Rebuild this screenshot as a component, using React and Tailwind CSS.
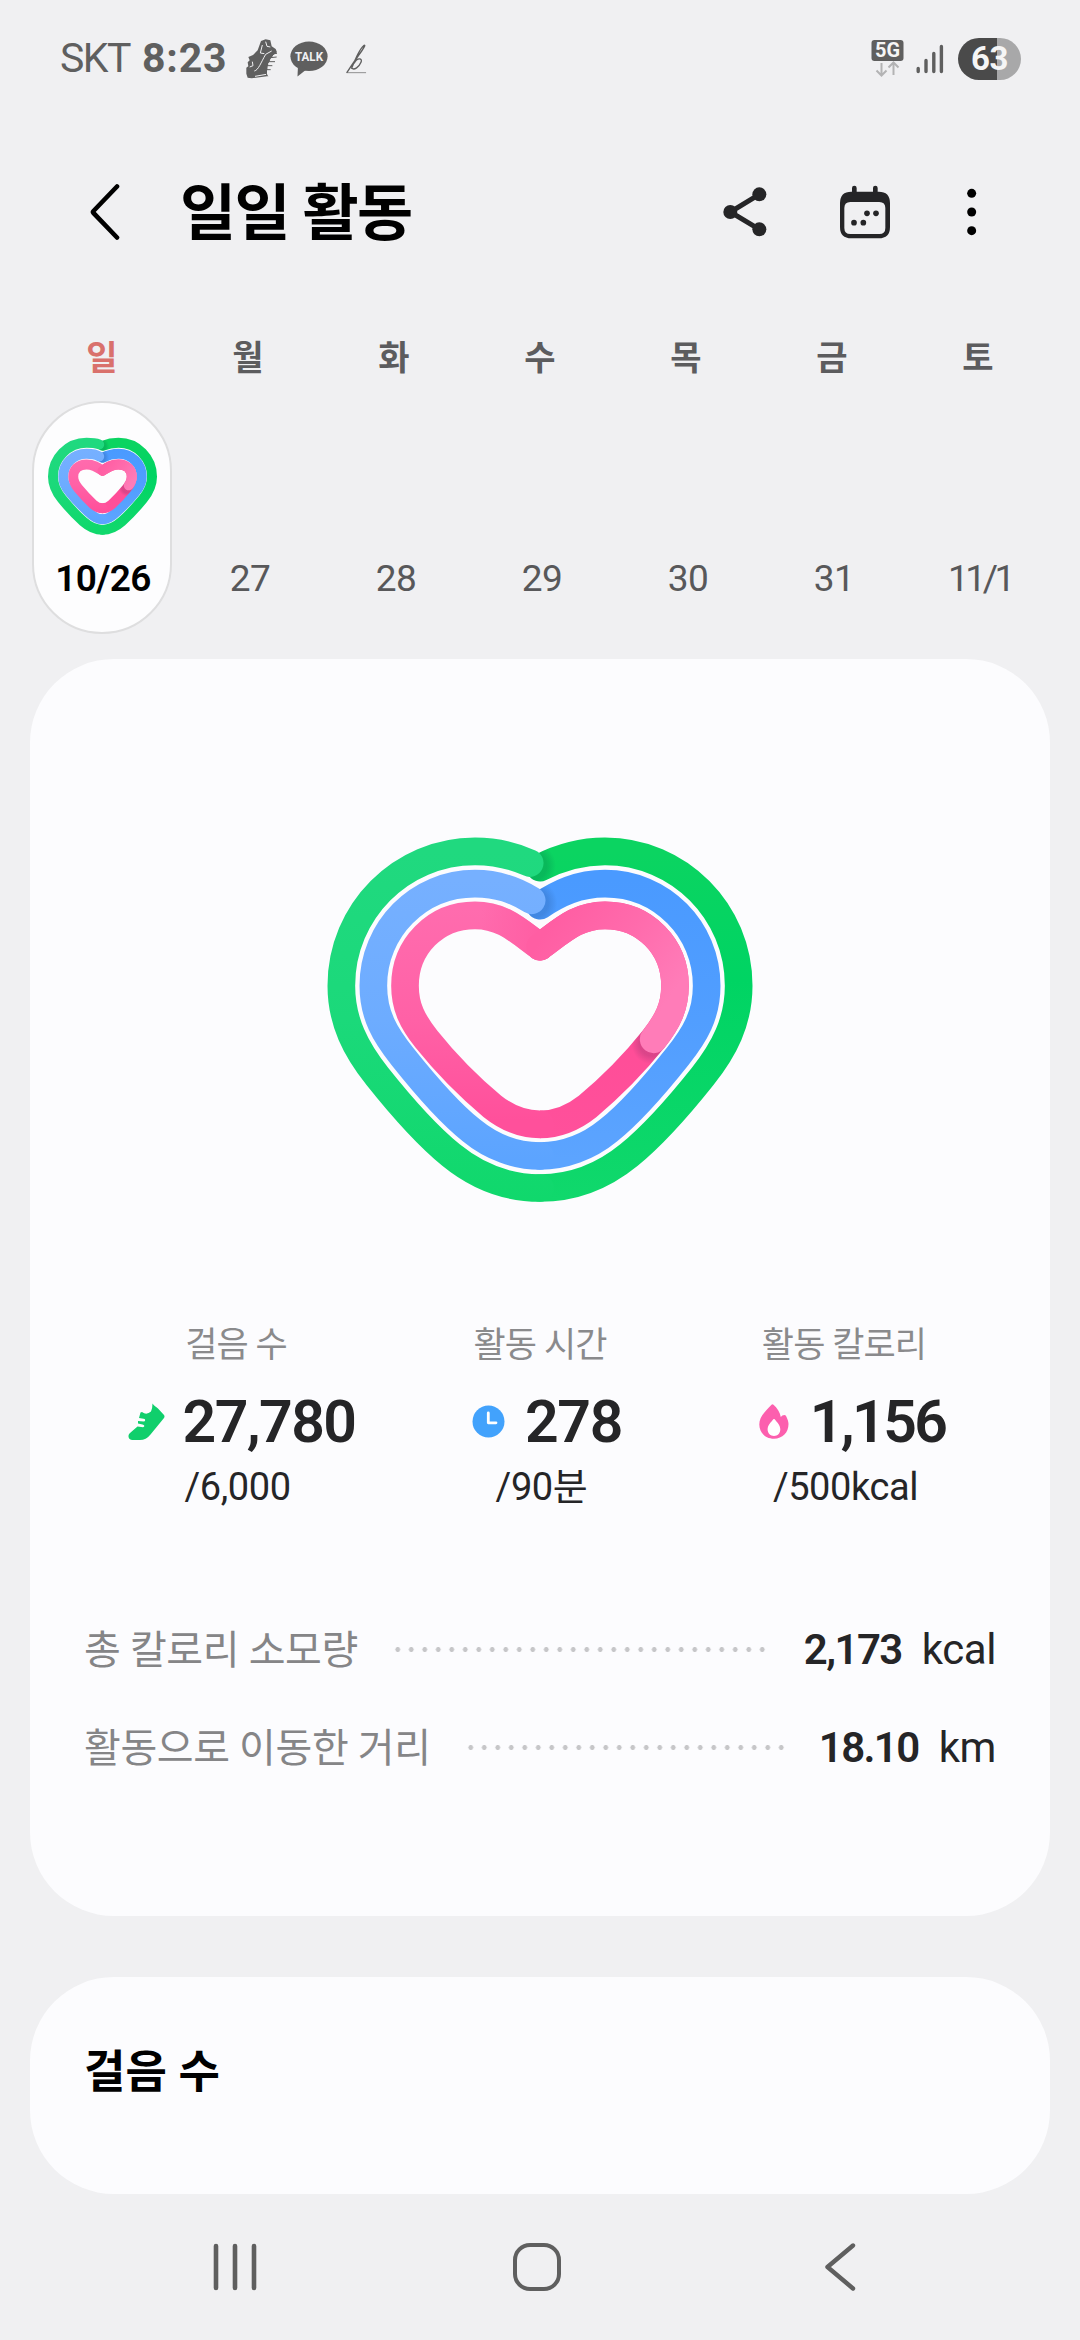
import React from 'react';

const days = [
  { name: '일', date: '10/26', selected: true },
  { name: '월', date: '27' },
  { name: '화', date: '28' },
  { name: '수', date: '29' },
  { name: '목', date: '30' },
  { name: '금', date: '31' },
  { name: '토', date: '11/1', tight: true },
];

// Right halves of the rings, from the notch clockwise to the tip
const large = {
  green: 'C750 112 815 94 885 94 C1107 94 1286 275 1286 497 C1286 605 1242 689 1178 769 C1112 852 1037 940 957 1005 C875 1072 785 1104 690 1104',
  blue: 'C745 220 805 191 885 191 C1055 191 1190 328 1190 497 C1190 585 1155 644 1103 709 C1045 782 973 870 895 932 C834 982 760 1008 690 1008',
  pink: 'C755 333 800 286 885 286 C1005 286 1095 380 1095 497 C1095 560 1073 604 1031 657 C975 727 906 798 833 859 C788 895 740 913 690 913',
};

const small = {
  green: 'C188 25 202 23 218 23 C274 23 319 69 319 125 C319 152 308 172 292 192 C274 214 250 240 228 260 C210 276 192 285 170 285',
  blue: 'C186 60 198 56 218 56 C258 56 288 86 288 125 C288 142 281 157 268 172 C250 194 232 213 212 231 C198 245 186 253 170 253',
  pink: 'C184 97 196 88 218 88 C244 88 258 105 258 125 C258 139 252 149 243 160 C229 177 214 193 198 208 C188 217 180 220 170 220',
};

const Gradients = ({ id, h }) => {
  const grad = (name, stops) => (
    <linearGradient id={id + name} gradientUnits="userSpaceOnUse" x1="0" y1="0" x2="0" y2={h}>
      {stops.map(([offset, color]) => (
        <stop key={offset} offset={offset} stopColor={color} />
      ))}
    </linearGradient>
  );
  return (
    <>
      {grad('gr', [[0.08, '#0bd461'], [0.4, '#00d463'], [0.95, '#10d86c']])}
      {grad('gl', [[0.08, '#20d97f'], [0.5, '#1bd97a'], [0.95, '#10d86c']])}
      {grad('br', [[0.15, '#4a9aff'], [0.5, '#519eff'], [0.85, '#5ca4ff']])}
      {grad('bl', [[0.15, '#76b0ff'], [0.5, '#6dacff'], [0.85, '#5ca4ff']])}
      {grad('pr', [[0.5, '#ff4d97'], [0.8, '#ff509b']])}
      {grad('pl', [[0.22, '#ff6cae'], [0.5, '#ff61a6'], [0.75, '#ff509b']])}
      <linearGradient id={id + 'pt'} gradientUnits="userSpaceOnUse" x1={h * 0.575} y1={h * 0.3} x2={h * 0.86} y2={h * 0.5}>
        <stop offset="0" stopColor="#ff5ea3" />
        <stop offset="0.5" stopColor="#ff6bac" />
        <stop offset="1" stopColor="#ff7cb8" />
      </linearGradient>
      <linearGradient id={id + 'pn'} gradientUnits="userSpaceOnUse" x1={h * 0.575} y1="0" x2={h * 0.72} y2="0">
        <stop offset="0" stopColor="#ff5ea3" />
        <stop offset="1" stopColor="#ff5ea3" stopOpacity="0" />
      </linearGradient>
    </>
  );
};

const Shadow = ({ id, x, y, r }) => (
  <radialGradient id={id} gradientUnits="userSpaceOnUse" cx={x} cy={y} r={r}>
    <stop offset="0.6" stopColor="#001030" stopOpacity="0.14" />
    <stop offset="1" stopColor="#001030" stopOpacity="0" />
  </radialGradient>
);

const LargeHeart = () => {
  const flip = 'matrix(-1 0 0 1 1380 0)';
  return (
    <svg className="mx-auto block h-[400px] w-[460px]" viewBox="0 0 1380 1200" fill="none" strokeWidth="83" strokeLinejoin="round">
      <defs>
        <Gradients id="l" h={1200} />
        <Shadow id="lsg" x={668} y={138} r={70} />
        <Shadow id="lsb" x={672} y={250} r={70} />
        <Shadow id="lsp" x={1026} y={671} r={62} />
      </defs>
      <path d={`M690 143 ${large.green}`} stroke="url(#lgr)" strokeLinecap="round" />
      <path d={`M690 143 ${large.green}`} stroke="url(#lsg)" strokeLinecap="round" />
      <path d={`M721 129 ${large.green.replace('C750 112 815 94', 'C770 107 825 94')}`} transform={flip} stroke="url(#lgl)" strokeLinecap="round" />

      <path d={`M690 257 ${large.blue}`} stroke="url(#lbr)" strokeLinecap="round" />
      <path d={`M690 257 ${large.blue}`} stroke="url(#lsb)" strokeLinecap="round" />
      <path d={`M715 241 ${large.blue.replace('C745 220 805 191', 'C765 210 815 191')}`} transform={flip} stroke="url(#lbl)" strokeLinecap="round" />

      <path d={`M690 380 ${large.pink}`} stroke="url(#lpr)" />
      <path d={`M690 380 ${large.pink}`} stroke="url(#lsp)" />
      <g transform={flip} strokeLinecap="round">
        <path d={`M690 380 ${large.pink}`} stroke="url(#lpl)" />
        <path d="M690 380 C755 333 800 286 885 286" stroke="url(#lpn)" />
      </g>
      <path d="M690 380 C755 333 800 286 885 286 C1005 286 1095 380 1095 497 C1095 560 1073 604 1031 658" stroke="url(#lpt)" strokeLinecap="round" />
    </svg>
  );
};

const SmallHeart = () => {
  const flip = 'matrix(-1 0 0 1 340 0)';
  return (
    <svg className="block h-[102px] w-[113px]" viewBox="0 0 340 306" fill="none" strokeWidth="30" strokeLinejoin="round" strokeLinecap="round">
      <defs>
        <Gradients id="s" h={300} />
        <Shadow id="ssg" x={160} y={34} r={30} />
        <Shadow id="ssb" x={160} y={68} r={30} />
        <Shadow id="ssp" x={244} y={158} r={26} />
      </defs>
      <path d={`M170 32 ${small.green}`} stroke="url(#sgr)" />
      <path d={`M170 32 ${small.green}`} stroke="url(#ssg)" />
      <path d={`M180 28 ${small.green}`} transform={flip} stroke="url(#sgl)" />
      <path d={`M170 68 ${small.blue}`} stroke="url(#sbr)" />
      <path d={`M170 68 ${small.blue}`} stroke="url(#ssb)" />
      <path d={`M180 64 ${small.blue}`} transform={flip} stroke="url(#sbl)" />
      <path d={`M170 107 ${small.pink}`} stroke="url(#spr)" />
      <path d={`M170 107 ${small.pink}`} stroke="url(#ssp)" />
      <path d={`M170 107 ${small.pink}`} transform={flip} stroke="url(#spl)" />
      <path d="M170 107 C184 97 196 88 218 88 C244 88 258 105 258 125 C258 136 254 144 249 151" stroke="url(#spt)" />
    </svg>
  );
};

const StatusBar = () => (
  <div className="flex h-[118px] items-center pl-[60px] pr-[59px] text-[#5f5f5f]">
    <span className="w-[82px] text-[41px] leading-none tracking-[-1.5px]">SKT</span>
    <span className="w-[103px] text-[41px] font-bold leading-none tracking-[0.8px]">8:23</span>
    <svg className="h-[40px] w-[34px]" viewBox="0 0 102 120">
      <path fill="#5f5f5f" d="M48 6 L62 1 L76 4 L80 22 L92 30 L96 40 L86 48 L78 58 L70 74 L66 96 L66 112 L20 118 L8 116 L4 104 L4 86 L10 82 L8 70 L14 64 L10 54 L24 48 L38 34 Z" />
      <path fill="none" stroke="#f0f0f2" strokeWidth="3" d="M84 50 L96 48 M76 62 L94 60 M70 74 L86 74 M68 84 L80 86 M66 96 L74 98 M14 84 L24 80 L22 68 M52 18 L46 42 L58 44 M62 8 L66 22 L76 24 M28 96 C40 94 48 70 62 46 L80 36 M30 112 L64 106" />
      <path fill="none" stroke="#5f5f5f" strokeWidth="3" d="M84 44 L96 43 M76 56 L95 54 M72 68 L90 68 M68 80 L82 80 M66 92 L77 92 M64 104 L68 112" />
    </svg>
    <svg className="ml-[11px] h-[36px] w-[38px]" viewBox="0 0 38 36">
      <ellipse cx="19" cy="15.3" rx="18.6" ry="14.8" fill="#5f5f5f" />
      <path d="M8 24 L7.5 35.5 L17 28 Z" fill="#5f5f5f" />
      <text x="19" y="19.8" textAnchor="middle" fontSize="12.5" fontWeight="700" fill="#f0f0f2" textLength="28" lengthAdjust="spacingAndGlyphs" fontFamily="Roboto, sans-serif">TALK</text>
    </svg>
    <svg className="ml-[17px] h-[32px] w-[22px]" viewBox="0 0 66 96" fill="none" stroke="#5f5f5f" strokeLinecap="round">
      <path strokeWidth="4" d="M6 88 C22 64 34 46 50 24 C60 10 62 4 56 8 C44 18 30 50 20 76 M28 60 C36 44 54 44 48 58 C42 72 28 82 20 76" />
      <path strokeWidth="2" d="M6 89 H62" />
    </svg>
    <div className="ml-auto flex items-center">
      <svg className="h-[40px] w-[33px]" viewBox="0 0 33 40">
        <rect x="0.5" y="1" width="32" height="21" rx="3" fill="#5f5f5f" />
        <text x="16.5" y="18.2" textAnchor="middle" fontSize="20" fontWeight="700" fill="#f5f5f5" textLength="25" lengthAdjust="spacingAndGlyphs" fontFamily="Roboto, sans-serif">5G</text>
        <path d="M10.5 24 V36 M5.5 31.5 L10.5 36.5 L15.5 31.5 M22.5 36 V24 M17.5 28.5 L22.5 23.5 L27.5 28.5" fill="none" stroke="#b3b3b4" strokeWidth="2" />
      </svg>
      <svg className="ml-[12px] h-[30px] w-[28px]" viewBox="0 0 28 30" fill="none" stroke="#5f5f5f" strokeWidth="3.4" strokeLinecap="round">
        <path d="M2.2 24.5 V27.5 M10 16.5 V27.5 M17.8 9.5 V27.5 M25.4 2.5 V27.5" />
      </svg>
      <div className="ml-[14px] flex h-[42px] w-[63px] items-center justify-center rounded-full bg-linear-to-r from-[#4a4a4a] from-62% to-[#a8a8a9] to-62% text-[33px] font-bold leading-none tracking-[-0.5px] text-[#f5f5f5]">
        63
      </div>
    </div>
  </div>
);

const Header = () => (
  <div className="flex h-[191px] items-center pl-[90px] pr-[59px]">
    <svg className="h-[58px] w-[30px]" viewBox="0 0 30 58" fill="none" stroke="#000" strokeWidth="4.6" strokeLinecap="round" strokeLinejoin="round">
      <path d="M27 2.5 L3.5 27 Q2.5 28 3.5 29 L27 53.5" />
    </svg>
    <h1 className="ml-[60px] pt-[3px] text-[61px] font-bold leading-none tracking-[-1.6px] text-black">일일 활동</h1>
    <svg className="ml-auto mt-[3px] h-[110px] w-[300px]" viewBox="90 0 900 330" fill="#252527">
      <circle cx="118" cy="156" r="21" />
      <circle cx="205" cy="103" r="21" />
      <circle cx="205" cy="208" r="21" />
      <path d="M205 103 L118 156 L205 208" fill="none" stroke="#252527" strokeWidth="15" />
      <path fillRule="evenodd" d="M481 95 H563 Q597 95 597 129 V201 Q597 235 563 235 H481 Q447 235 447 201 V129 Q447 95 481 95 Z M478 126 Q460 126 460 144 V204 Q460 222 478 222 H565 Q583 222 583 204 V144 Q583 126 565 126 Z" />
      <path d="M490 84 V100 M553 84 V100" stroke="#252527" strokeWidth="14" strokeLinecap="round" />
      <circle cx="528" cy="160" r="8.5" />
      <circle cx="555" cy="160" r="8.5" />
      <circle cx="489" cy="188" r="8.5" />
      <circle cx="517" cy="188" r="8.5" />
      <g fill="#000">
        <circle cx="842" cy="100" r="13.5" />
        <circle cx="842" cy="156" r="13.5" />
        <circle cx="842" cy="212" r="13.5" />
      </g>
    </svg>
  </div>
);

const WeekStrip = () => (
  <div className="grid h-[350px] grid-cols-7 px-[29px]">
    {days.map((day) => (
      <div key={day.date} className="flex flex-col items-center">
        <div className={`h-[92px] pt-[24px] text-[34px] font-bold leading-[50px] ${day.selected ? 'text-[#d9716c]' : 'text-[#5c5c5e]'}`}>
          {day.name}
        </div>
        {day.selected ? (
          <div className="flex h-[233px] w-[140px] flex-col items-center rounded-full border-2 border-[#dededf] bg-[#fdfdfe] pt-[32px]">
            <SmallHeart />
            <span className="ml-[2px] mt-[20px] text-[37px] font-semibold leading-[43px] tracking-[-0.6px] text-black">{day.date}</span>
          </div>
        ) : (
          <span className={`ml-[4px] mt-[156px] text-[37px] leading-[43px] text-[#58585a] ${day.tight ? 'tracking-[-3.4px]' : 'tracking-[-0.5px]'}`}>
            {day.date}
          </span>
        )}
      </div>
    ))}
  </div>
);

const ShoeIcon = () => (
  <svg className="h-[37px] w-[37px]" viewBox="0 0 37 37">
    <path fill="#10cf6c" d="M24.5 0.5 C26 2.5 28 4 30 5.5 L36 12 Q37 13.5 36 15 L22.5 31.5 C19.5 35.5 16 37 12 37 H4 C0 37 -0.5 32 2 30 L9.5 23.5 L15 24.2 Q16.5 24 16.3 22.7 Q16 21.5 14.5 21.4 L10 20.5 V18 L15.5 18.5 Q17.2 18.5 17.2 17 Q17 15.8 15.5 15.7 L11 15 L12.5 9.5 L14 9 Q18.5 12.5 23 8.5 Q24.5 5 24.5 0.5 Z" />
  </svg>
);

const ClockIcon = () => (
  <svg className="h-[33px] w-[33px]" viewBox="0 0 33 33">
    <circle cx="16.5" cy="16.5" r="16" fill="#42a2fc" />
    <path d="M16.3 8 V17.8 H24" fill="none" stroke="#fff" strokeWidth="2.8" strokeLinecap="round" strokeLinejoin="round" />
  </svg>
);

const FlameIcon = () => (
  <svg className="h-[35px] w-[30px]" viewBox="0 0 30 35">
    <path fill="#fc5fae" d="M12.5 0.7 Q13.5 -0.2 14.5 0.8 C18 4 21 8 21.8 13 Q23 11 25.5 11 Q27 11 27.3 12.5 C28.5 15 29.5 17.5 29.5 20 C29.5 28.5 23.5 34.7 15 34.7 C6.5 34.7 0.3 28.5 0.3 20.5 C0.3 12.5 6.5 7 12.5 0.7 Z" />
    <path fill="#fff" d="M14.3 15.3 Q15 14.6 15.7 15.3 C18.3 18.5 21.3 21.5 21.3 25.5 C21.3 29.2 18.5 32 15 32 C11.5 32 8.6 29.2 8.6 25.5 C8.6 21.5 11.7 18.5 14.3 15.3 Z" />
  </svg>
);

const stats = [
  { label: '걸음 수', value: '27,780', goal: '/6,000', Icon: ShoeIcon, gap: 'gap-[18px] pl-[11px] tracking-[-1.6px]' },
  { label: '활동 시간', value: '278', goal: '/90분', Icon: ClockIcon, gap: 'gap-[20px] pl-[14px] tracking-[-1.3px]' },
  { label: '활동 칼로리', value: '1,156', goal: '/500kcal', Icon: FlameIcon, gap: 'gap-[21px] pl-[16px] tracking-[-2.6px]' },
];

const Stat = ({ label, value, goal, Icon, gap }) => (
  <div className="flex flex-col items-center">
    <div className="pt-[2px] text-[35px] leading-[48px] tracking-[-0.9px] text-[#8a8a8c]">{label}</div>
    <div className={`mt-[17px] flex h-[70px] items-center ${gap}`}>
      <Icon />
      <span className="text-[59px] font-semibold leading-[70px] text-[#252527]">{value}</span>
    </div>
    <div className="ml-[3px] mt-[6px] text-[38px] leading-[48px] tracking-[-0.4px] text-[#252527]">{goal}</div>
  </div>
);

const DetailRow = ({ label, value, unit }) => (
  <div className="flex h-[50px] items-center text-[42px] leading-[50px] text-[#252527]">
    <span className="pt-[3px] text-[40px] tracking-[-0.4px] text-[#858587]">{label}</span>
    <span className="ml-[33px] mr-[32px] h-[5px] flex-1 bg-[radial-gradient(circle,#c6c6c8_2.2px,transparent_2.7px)] bg-[length:13.5px_5px] bg-repeat-x" />
    <span className="font-semibold tracking-[-1.6px]">{value}</span>
    <span className="ml-[20px] tracking-[-0.4px]">{unit}</span>
  </div>
);

const NavBar = () => (
  <div className="flex h-[146px] items-center pl-[212px] pr-[222px]">
    <svg className="h-[50px] w-[46px]" viewBox="0 0 46 50" stroke="#5f5f5f" strokeWidth="4.6" strokeLinecap="round">
      <path d="M4 4 V46 M23 4 V46 M42 4 V46" />
    </svg>
    <div className="ml-[255px] h-[48px] w-[48px] rounded-[17px] border-[4.6px] border-[#5f5f5f]" />
    <svg className="ml-auto h-[50px] w-[34px]" viewBox="0 0 34 50" fill="none" stroke="#5f5f5f" strokeWidth="4.4" strokeLinecap="round" strokeLinejoin="round">
      <path d="M29 3.5 L3.5 25 L29 46.5" />
    </svg>
  </div>
);

const App = () => {
  return (
    <div className="flex h-[2340px] w-[1080px] flex-col overflow-hidden bg-[#f0f0f2] font-[Roboto,'Noto_Sans_CJK_KR',sans-serif]">
      <StatusBar />
      <Header />
      <WeekStrip />

      <div className="mx-[30px] h-[1258px] rounded-[84px] bg-[#fcfcfe] px-[54px] pt-[161px]">
        <LargeHeart />
        <div className="mt-[100px] grid grid-cols-3">
          {stats.map((stat) => (
            <Stat key={stat.label} {...stat} />
          ))}
        </div>
        <div className="mt-[114px] flex flex-col gap-[48px]">
          <DetailRow label="총 칼로리 소모량" value="2,173" unit="kcal" />
          <DetailRow label="활동으로 이동한 거리" value="18.10" unit="km" />
        </div>
      </div>

      <div className="mx-[30px] mt-[61px] h-[217px] rounded-[84px] bg-[#fcfcfe] px-[54px] pt-[71px]">
        <h2 className="text-[45px] font-bold leading-[50px] tracking-[0.2px] text-black">걸음 수</h2>
      </div>

      <NavBar />
    </div>
  );
};

export default App;
